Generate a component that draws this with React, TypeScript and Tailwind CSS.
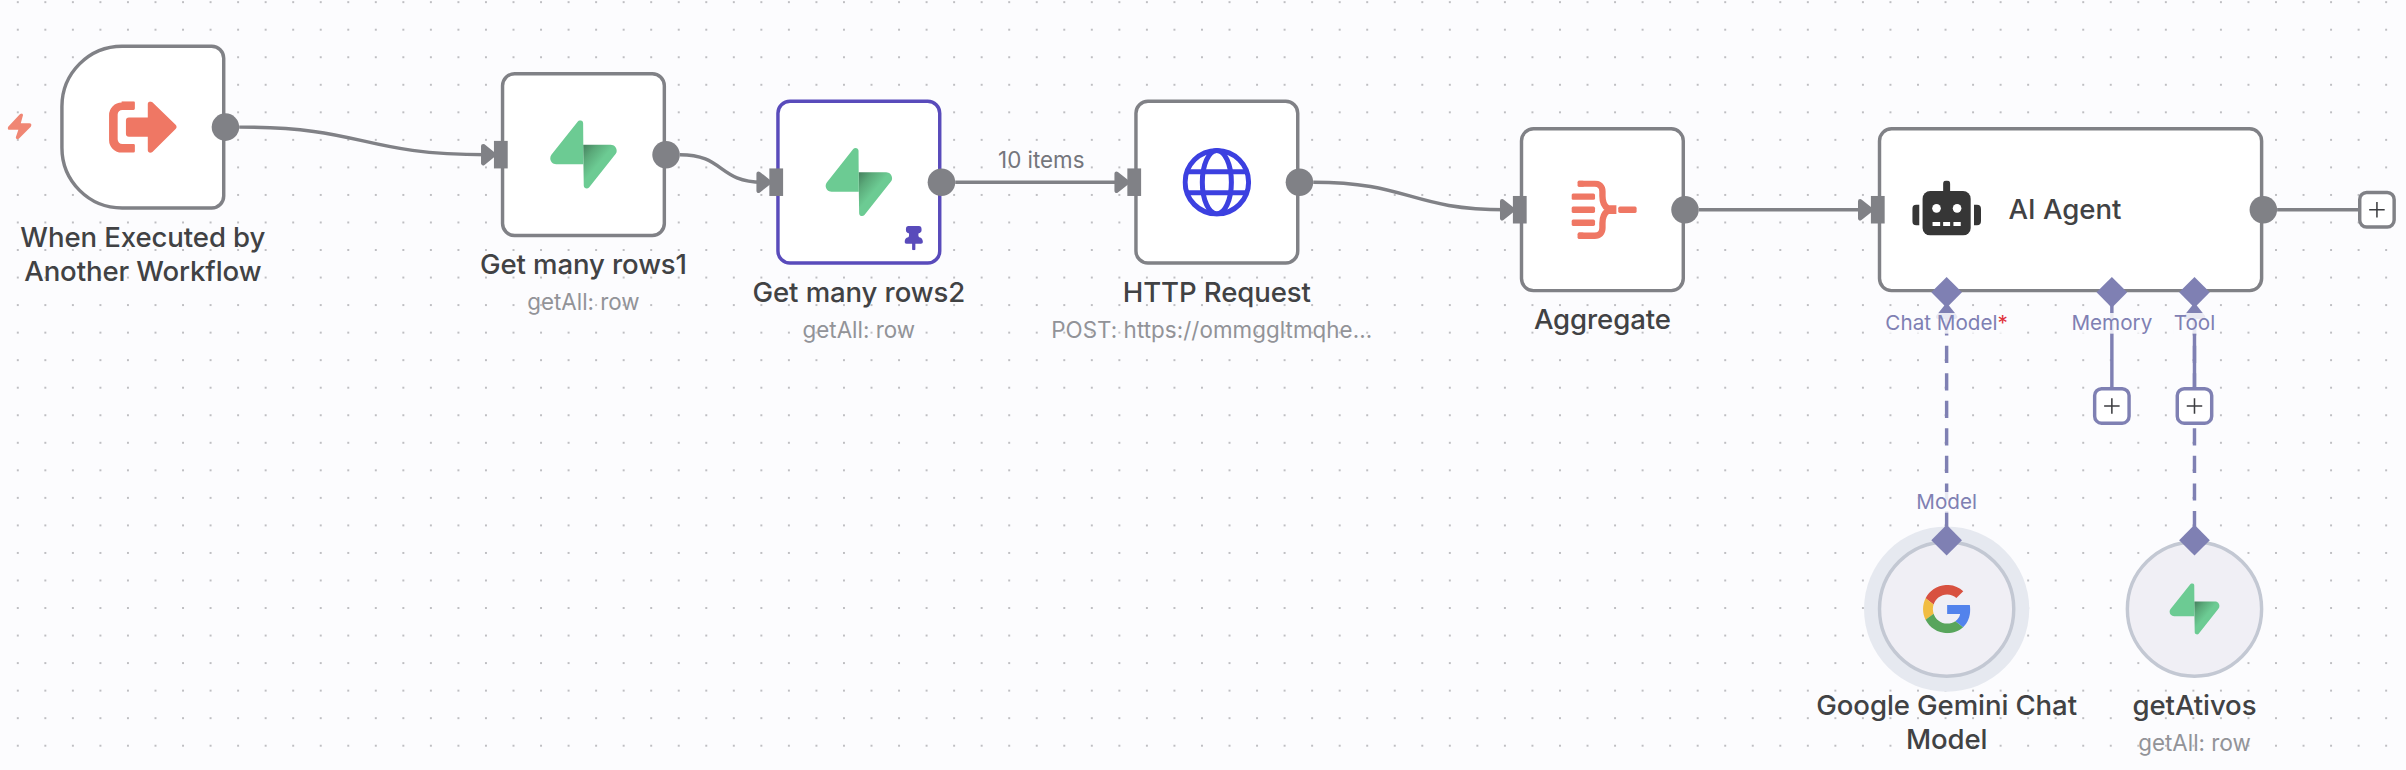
import React, { useId } from "react";

const GREY = "#808186";
const VIOLET = "#7f80b3";

function ExecuteIcon() {
  return (
    <svg className="h-[30px] w-10" viewBox="325 244 204 156" fill="#ef7764">
      <path d="M363 244h36a4 4 0 0 1 4 4v18a4 4 0 0 1-4 4h-34a14 14 0 0 0-14 14v75a14 14 0 0 0 14 14h34a4 4 0 0 1 4 4v18a4 4 0 0 1-4 4h-36a38 38 0 0 1-38-38v-75a38 38 0 0 1 38-38z" />
      <path d="M442 252c0-8 8-10 14-5l70 68c4 4 4 9 0 13l-70 69c-6 5-14 2-14-5v-41h-57a9 9 0 0 1-9-9v-40a9 9 0 0 1 9-9h57z" />
    </svg>
  );
}

function BoltIcon() {
  return (
    <svg className="h-[15px] w-[14px]" viewBox="22 279 69 75" fill="#f08674">
      <path d="M58 281c4-4 10-1 8 5l-6 22h25c6 0 8 5 4 10l-34 34c-4 4-11 1-9-5l7-20H28c-6 0-8-5-4-10z" />
    </svg>
  );
}

function SupabaseIcon({ className }: { className: string }) {
  const id = useId();
  return (
    <svg className={className} viewBox="0 0 109 113" fill="none">
      <defs>
        <linearGradient id={id} x1="54" y1="41" x2="84" y2="66" gradientUnits="userSpaceOnUse">
          <stop stopColor="#45805e" />
          <stop offset="0.45" stopColor="#5aa979" />
          <stop offset="1" stopColor="#6ccb93" />
        </linearGradient>
      </defs>
      <path
        fill={`url(#${id})`}
        d="M63.7 110.3C60.8 113.9 55 111.9 55 107.3L54 40.1H99.2C107.4 40.1 112 49.5 106.9 55.9Z"
      />
      <path
        fill="#6ccb93"
        d="M45.3 2.1C48.2-1.5 54 .4 54 5L54.5 72.3H9.8C1.6 72.3-2.9 62.8 2.2 56.4Z"
      />
    </svg>
  );
}

function PinIcon() {
  return (
    <svg className="h-[14px] w-[11px]" viewBox="494 438 56 74" fill="#594bbb">
      <path d="M506 438h32c5 0 8 4 8 9v4c0 5-4 9-9 9-2 8 0 10 2 12 7 1 11 7 11 14 0 4-2 6-6 6h-17v17c0 4-10 4-10 0v-17h-17c-4 0-6-2-6-6 0-7 4-13 11-14 2-2 4-4 2-12-5 0-9-4-9-9v-4c0-5 3-9 8-9z" />
    </svg>
  );
}

function GlobeIcon() {
  return (
    <svg className="h-10 w-10" viewBox="457 204 206 206" fill="none" stroke="#3c40e0" strokeWidth="15">
      <circle cx="560" cy="307" r="95" />
      <ellipse cx="560" cy="307" rx="43.5" ry="95" />
      <path d="M470 275.5h180M470 338.5h180" />
    </svg>
  );
}

function AggregateIcon() {
  return (
    <svg className="ml-0.5 h-[34px] w-[38px]" viewBox="276 243 194 174" fill="#ef7764">
      <path
        d="M297 252.5h48c14 0 23 9 23 23v14c0 20 5 30 16 37h16v7h-16c-11 7-16 17-16 37v14c0 14-9 23-23 23h-48"
        fill="none"
        stroke="#ef7764"
        strokeWidth="19"
      />
      <path d="M380 320h18a5 5 0 0 1 5 5v10a5 5 0 0 1-5 5h-18z" />
      <rect x="276" y="281.5" width="70" height="19" rx="5" />
      <rect x="276" y="320.5" width="70" height="19" rx="5" />
      <rect x="276" y="359" width="70" height="19" rx="5" />
      <rect x="294" y="243" width="20" height="19" rx="5" />
      <rect x="294" y="398" width="20" height="19" rx="5" />
      <rect x="415" y="320.5" width="55" height="19" rx="5" />
    </svg>
  );
}

function RobotIcon() {
  return (
    <svg className="h-8 w-10" viewBox="216 216 207 166" fill="#363636">
      <rect x="309" y="216" width="21" height="45" rx="10" />
      <rect x="247" y="248" width="145" height="134" rx="23" />
      <path d="M228 289h9v62h-9a12 12 0 0 1-12-12v-38a12 12 0 0 1 12-12zM402 289h9a12 12 0 0 1 12 12v38a12 12 0 0 1-12 12h-9z" />
      <g fill="#fff">
        <circle cx="289" cy="300" r="13" />
        <circle cx="351" cy="300" r="13" />
        <path d="M277 341h23v12h-23zM309 341h21v12h-21zM340 341h22v12h-22z" />
      </g>
    </svg>
  );
}

function GoogleIcon() {
  return (
    <svg className="size-7" viewBox="0 0 47 48">
      <path fill="#d85140" d="M24 9.5c3.54 0 6.71 1.22 9.21 3.6l6.85-6.85C35.9 2.38 30.47 0 24 0 14.62 0 6.51 5.38 2.56 13.22l7.98 6.19C12.43 13.72 17.74 9.5 24 9.5z" />
      <path fill="#5383ec" d="M46.98 24.55c0-1.57-.15-3.09-.38-4.55H24v9.02h12.94c-.58 2.96-2.26 5.48-4.78 7.18l7.73 6c4.51-4.18 7.09-10.36 7.09-17.65z" />
      <path fill="#f1bd42" d="M10.53 28.59c-.48-1.45-.76-2.99-.76-4.59s.27-3.14.76-4.59l-7.98-6.19C.92 16.46 0 20.12 0 24c0 3.88.92 7.54 2.56 10.78l7.97-6.19z" />
      <path fill="#58a55c" d="M24 48c6.48 0 11.93-2.13 15.89-5.81l-7.73-6c-2.15 1.45-4.92 2.3-8.16 2.3-6.26 0-11.57-4.22-13.47-9.91l-7.98 6.19C6.51 42.62 14.62 48 24 48z" />
    </svg>
  );
}

function Grid() {
  return (
    <svg className="absolute inset-0 h-full w-full">
      <defs>
        <pattern id="grid-dots" x="4.03" y="15.93" width="27.539" height="27.539" patternUnits="userSpaceOnUse">
          <circle cx="13.77" cy="13.77" r="1" fill="#aaaaad" />
        </pattern>
      </defs>
      <rect width="100%" height="100%" fill="url(#grid-dots)" />
    </svg>
  );
}

function Arrow({ x, y, up, color = GREY }: { x: number; y: number; up?: boolean; color?: string }) {
  return (
    <polygon
      points="-5,-4 0,0 -5,4"
      transform={`translate(${x} ${y}) rotate(${up ? -90 : 0}) scale(1.25)`}
      fill={color}
      stroke={color}
      strokeWidth="2"
      strokeLinejoin="round"
    />
  );
}

function Edges() {
  return (
    <svg className="absolute left-0 top-0 h-[420px] w-[1370px] overflow-visible" fill="none" strokeWidth="2">
      <g stroke={GREY}>
        <path d="M104 48C178 48 174 64 248 64" />
        <path d="M360 64C386 64 382 80 408 80" />
        <path d="M520 80H616" />
        <path d="M728 80C784 80 784 96 840 96" />
        <path d="M952 96H1048" />
        <path d="M1288 96H1336" />
      </g>
      <g stroke={VIOLET}>
        <path d="M1192 144V200M1240 144V200" />
        <path d="M1096 280V156M1240 280V156" strokeDasharray="8 8" strokeLinecap="square" />
      </g>
      <Arrow x={252} y={64} />
      <Arrow x={412} y={80} />
      <Arrow x={620} y={80} />
      <Arrow x={844} y={96} />
      <Arrow x={1052} y={96} />
      <Arrow x={1096} y={152} up color={VIOLET} />
      <Arrow x={1240} y={152} up color={VIOLET} />
    </svg>
  );
}

function Input() {
  return <span className="absolute -left-[6px] top-[38px] h-4 w-2 bg-[#808186]" />;
}

function Output() {
  return <span className="absolute -right-[10px] top-[38px] size-4 rounded-full bg-[#808186]" />;
}

function Diamond({ className }: { className: string }) {
  return <span className={`absolute size-3 rotate-45 scale-105 bg-[#7f80b3] ${className}`} />;
}

function Caption({ title, subtitle, truncated }: { title: string; subtitle?: string; truncated?: boolean }) {
  return (
    <div className="flex translate-y-[0.5px] flex-col items-center pt-[5px] text-center">
      <div className="w-40 text-[16px] font-medium leading-[20px] tracking-[-0.05px] text-[#414244]">{title}</div>
      {subtitle && (
        <div
          className={`mt-1 whitespace-nowrap text-[13px] leading-[16px] text-[#929398] ${truncated ? "pr-[6px] tracking-[0.03px]" : ""}`}
        >
          {subtitle}
        </div>
      )}
    </div>
  );
}

interface NodeProps {
  place: string;
  box: string;
  title: string;
  subtitle?: string;
  truncated?: boolean;
  children: React.ReactNode;
}

function Node({ place, box, title, subtitle, truncated, children }: NodeProps) {
  return (
    <div className={`absolute flex flex-col items-center ${place}`}>
      <div className={`relative flex shrink-0 items-center justify-center border-2 ${box}`}>{children}</div>
      <Caption title={title} subtitle={subtitle} truncated={truncated} />
    </div>
  );
}

function PlusButton({ className }: { className: string }) {
  return (
    <button
      aria-label="Add"
      className={`absolute flex size-[22px] items-center justify-center rounded-[5px] border-2 bg-white ${className}`}
    >
      <svg className="size-[10px]" viewBox="0 0 10 10" stroke="#3c3d40" strokeWidth="0.9">
        <path d="M5 .5v9M.5 5h9" />
      </svg>
    </button>
  );
}

function PortLabel({ className, children }: { className: string; children: React.ReactNode }) {
  return (
    <span
      className={`absolute -translate-x-1/2 whitespace-nowrap bg-[#fcfcfe]/85 text-[12px] leading-[12px] text-[#7f80b3] ${className}`}
    >
      {children}
    </span>
  );
}

export default function App() {
  return (
    <main className="relative h-[770px] w-[2406px] overflow-hidden bg-[#fcfcfe] font-['Inter',sans-serif]">
      <Grid />
      <div className="absolute left-0 top-0 h-[420px] w-[1370px] origin-top-left [transform:translate(60.2px,44.5px)_scale(1.7212)]">
        <Edges />

        <span className="absolute -left-[31px] top-[40px] translate-x-[0.4px]">
          <BoltIcon />
        </span>

        <Node
          place="-left-8 top-0 w-40"
          box="size-24 rounded-l-[36px] rounded-r-lg border-[#808186] bg-white"
          title="When Executed by Another Workflow"
        >
          <ExecuteIcon />
          <Output />
        </Node>

        <Node
          place="left-[224px] top-4 w-40"
          box="size-24 rounded-lg border-[#808186] bg-white"
          title="Get many rows1"
          subtitle="getAll: row"
        >
          <SupabaseIcon className="size-10" />
          <Input />
          <Output />
        </Node>

        <Node
          place="left-[384px] top-8 w-40"
          box="size-24 rounded-lg border-[#594bbb] bg-white"
          title="Get many rows2"
          subtitle="getAll: row"
        >
          <SupabaseIcon className="size-10" />
          <span className="absolute bottom-[7px] right-[9px] translate-x-[0.4px] translate-y-[0.5px]">
            <PinIcon />
          </span>
          <Input />
          <Output />
        </Node>

        <span className="absolute left-[570px] top-[59px] -translate-x-1/2 whitespace-nowrap text-[13px] leading-[16px] text-[#74767c]">
          10 items
        </span>

        <Node
          place="left-[592px] top-8 w-40"
          box="size-24 rounded-lg border-[#808186] bg-white"
          title="HTTP Request"
          subtitle="POST: https://ommggltmqhe..."
          truncated
        >
          <GlobeIcon />
          <Input />
          <Output />
        </Node>

        <Node
          place="left-[816px] top-12 w-40"
          box="size-24 rounded-lg border-[#808186] bg-white"
          title="Aggregate"
        >
          <AggregateIcon />
          <Input />
          <Output />
        </Node>

        <section className="absolute left-[1056px] top-12 flex h-24 w-56 items-center gap-4 rounded-lg border-2 border-[#808186] bg-white pl-[18px]">
          <span className="pb-0.5">
            <RobotIcon />
          </span>
          <span className="-translate-y-[0.5px] pb-px text-[16px] font-medium leading-[20px] text-[#414244]">AI Agent</span>
          <Input />
          <Output />
          <Diamond className="left-8 top-[88px]" />
          <Diamond className="left-32 top-[88px]" />
          <Diamond className="left-44 top-[88px]" />
          <PortLabel className="left-[38px] top-[106px]">
            Chat Model<span className="text-[#e0323c]">*</span>
          </PortLabel>
          <PortLabel className="left-[134px] top-[106px]">Memory</PortLabel>
          <PortLabel className="left-[182px] top-[106px]">Tool</PortLabel>
        </section>

        <PlusButton className="left-[1335px] top-[85px] border-[#808186]" />
        <PlusButton className="left-[1181px] top-[199px] border-[#7f80b3]" />
        <PlusButton className="left-[1229px] top-[199px] border-[#7f80b3]" />

        <Node
          place="left-[1016px] top-[288px] w-40"
          box="size-20 rounded-full border-[#c3c8d3] bg-[#f0eff5] shadow-[0_0_0_8px_#e6e9f0]"
          title="Google Gemini Chat Model"
        >
          <GoogleIcon />
          <Diamond className="-top-2 left-8" />
          <PortLabel className="-top-[30px] left-[38px]">Model</PortLabel>
        </Node>

        <Node
          place="left-[1160px] top-[288px] w-40"
          box="size-20 rounded-full border-[#c3c8d3] bg-[#f0eff5]"
          title="getAtivos"
          subtitle="getAll: row"
        >
          <SupabaseIcon className="size-[30px]" />
          <Diamond className="-top-2 left-8" />
        </Node>
      </div>
    </main>
  );
}
